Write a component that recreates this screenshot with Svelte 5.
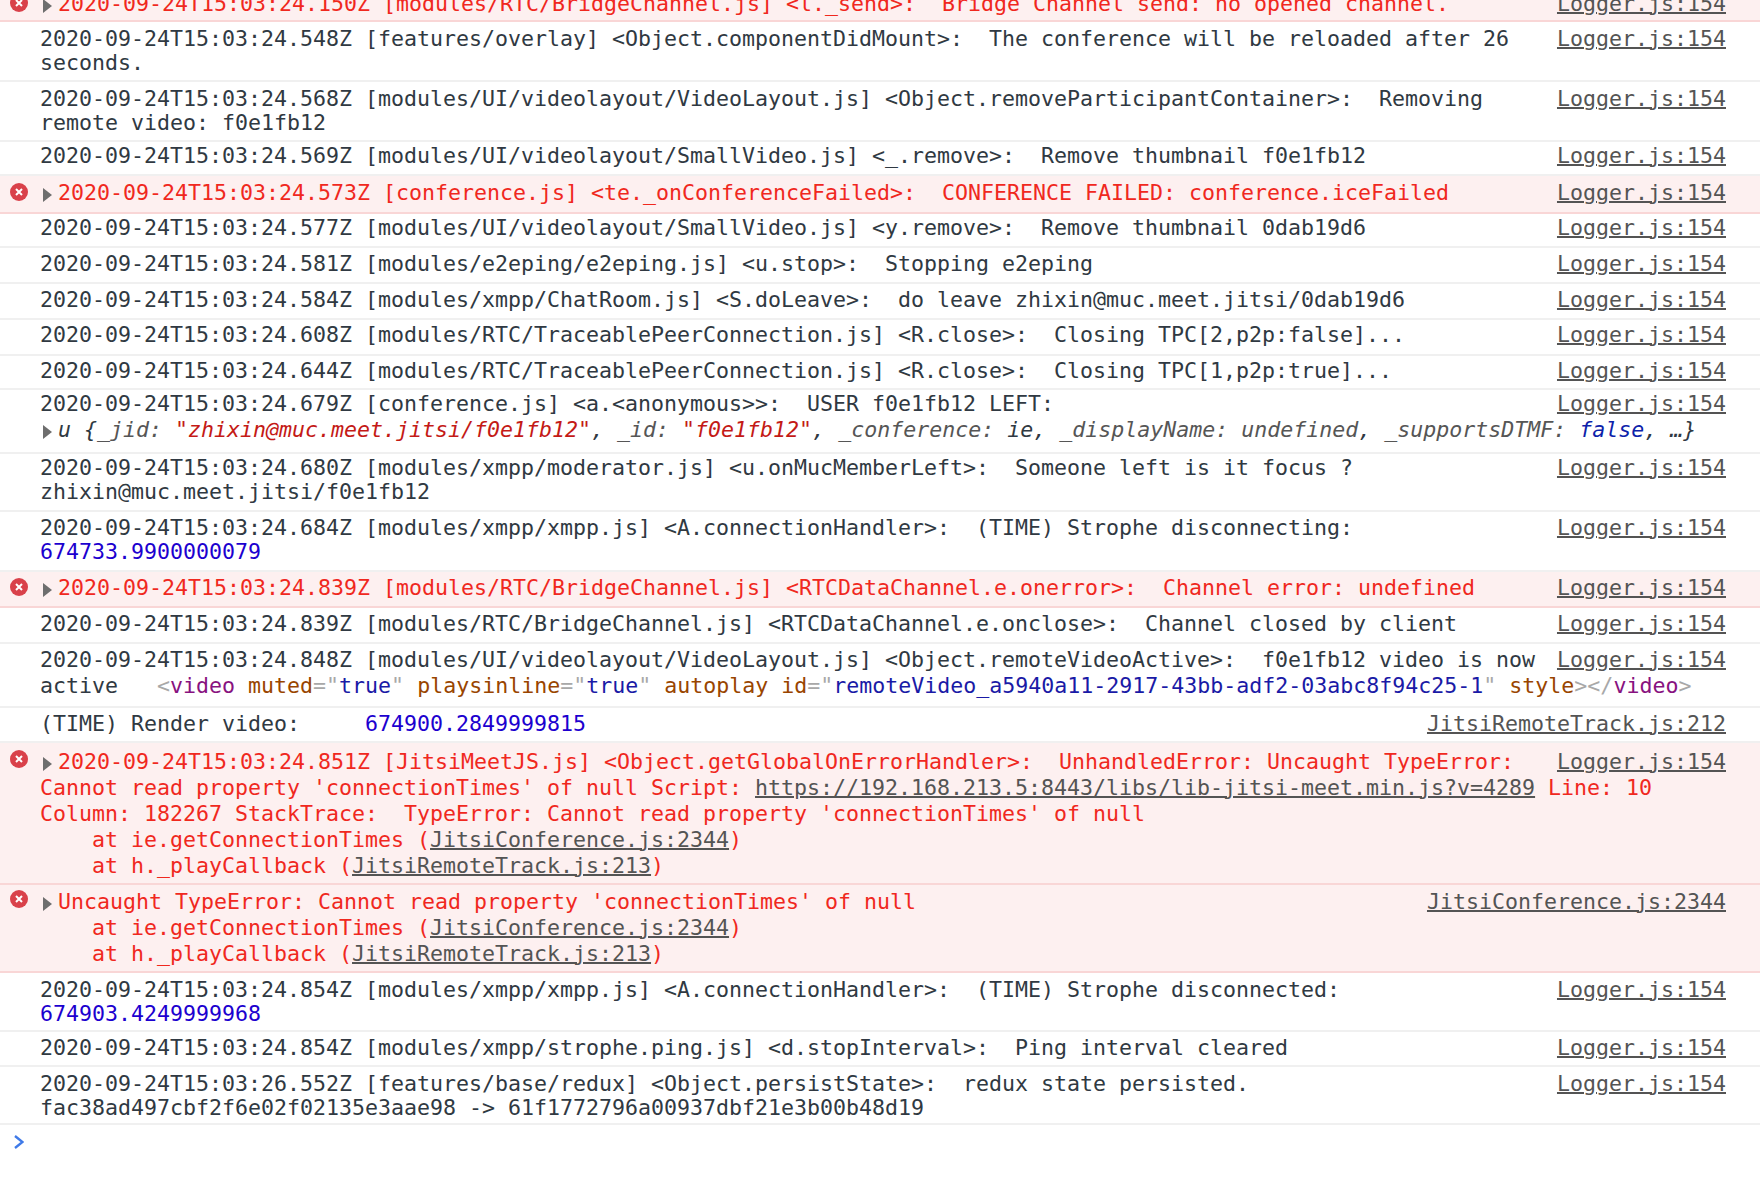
<script>
  const L = 'Logger.js:154';
  const s = (c, t) => ({ c, t });
  const plain = (...ls) => ls.map((t) => [s('', t)]);

  // h = row height, top = text offset inside the row
  const rows = [
    { err: true, src: L, h: 22, top: -8, lines: plain('2020-09-24T15:03:24.150Z [modules/RTC/BridgeChannel.js] <l._send>:  Bridge Channel send: no opened channel.') },
    { src: L, h: 60, top: 5, lines: plain('2020-09-24T15:03:24.548Z [features/overlay] <Object.componentDidMount>:  The conference will be reloaded after 26', 'seconds.') },
    { src: L, h: 60, top: 5, lines: plain('2020-09-24T15:03:24.568Z [modules/UI/videolayout/VideoLayout.js] <Object.removeParticipantContainer>:  Removing', 'remote video: f0e1fb12') },
    { src: L, h: 34, top: 2, lines: plain('2020-09-24T15:03:24.569Z [modules/UI/videolayout/SmallVideo.js] <_.remove>:  Remove thumbnail f0e1fb12') },
    { err: true, src: L, h: 38, top: 5, lines: plain('2020-09-24T15:03:24.573Z [conference.js] <te._onConferenceFailed>:  CONFERENCE FAILED: conference.iceFailed') },
    { src: L, h: 34, top: 2, lines: plain('2020-09-24T15:03:24.577Z [modules/UI/videolayout/SmallVideo.js] <y.remove>:  Remove thumbnail 0dab19d6') },
    { src: L, h: 36, top: 4, lines: plain('2020-09-24T15:03:24.581Z [modules/e2eping/e2eping.js] <u.stop>:  Stopping e2eping') },
    { src: L, h: 36, top: 4, lines: plain('2020-09-24T15:03:24.584Z [modules/xmpp/ChatRoom.js] <S.doLeave>:  do leave zhixin@muc.meet.jitsi/0dab19d6') },
    { src: L, h: 36, top: 3, lines: plain('2020-09-24T15:03:24.608Z [modules/RTC/TraceablePeerConnection.js] <R.close>:  Closing TPC[2,p2p:false]...') },
    { src: L, h: 34, top: 3, lines: plain('2020-09-24T15:03:24.644Z [modules/RTC/TraceablePeerConnection.js] <R.close>:  Closing TPC[1,p2p:true]...') },
    { src: L, h: 64, top: 1, tall: true, object: true, lines: plain('2020-09-24T15:03:24.679Z [conference.js] <a.<anonymous>>:  USER f0e1fb12 LEFT:') },
    { src: L, h: 58, top: 2, lines: plain('2020-09-24T15:03:24.680Z [modules/xmpp/moderator.js] <u.onMucMemberLeft>:  Someone left is it focus ?', 'zhixin@muc.meet.jitsi/f0e1fb12') },
    { src: L, h: 60, top: 4, lines: [[s('', '2020-09-24T15:03:24.684Z [modules/xmpp/xmpp.js] <A.connectionHandler>:  (TIME) Strophe disconnecting:')], [s('num', '674733.9900000079')]] },
    { err: true, src: L, h: 36, top: 4, lines: plain('2020-09-24T15:03:24.839Z [modules/RTC/BridgeChannel.js] <RTCDataChannel.e.onerror>:  Channel error: undefined') },
    { src: L, h: 36, top: 4, lines: plain('2020-09-24T15:03:24.839Z [modules/RTC/BridgeChannel.js] <RTCDataChannel.e.onclose>:  Channel closed by client') },
    { src: L, h: 64, top: 3, tall: true, lines: [[s('', '2020-09-24T15:03:24.848Z [modules/UI/videolayout/VideoLayout.js] <Object.remoteVideoActive>:  f0e1fb12 video is now')],
      [s('', 'active   '), s('punc', '<'), s('tag', 'video'), s('', ' '), s('attr', 'muted'), s('punc', '="'), s('val', 'true'), s('punc', '"'), s('', ' '), s('attr', 'playsinline'), s('punc', '="'), s('val', 'true'), s('punc', '"'), s('', ' '), s('attr', 'autoplay'), s('', ' '), s('attr', 'id'), s('punc', '="'), s('val', 'remoteVideo_a5940a11-2917-43bb-adf2-03abc8f94c25-1'), s('punc', '"'), s('', ' '), s('attr', 'style'), s('punc', '></'), s('tag', 'video'), s('punc', '>')]] },
    { src: 'JitsiRemoteTrack.js:212', h: 35, top: 4, lines: [[s('', '(TIME) Render video:     '), s('num', '674900.2849999815')]] },
    { err: true, tall: true, src: L, h: 142, top: 6, lines: [
      [s('', '2020-09-24T15:03:24.851Z [JitsiMeetJS.js] <Object.getGlobalOnErrorHandler>:  UnhandledError: Uncaught TypeError:')],
      [s('', "Cannot read property 'connectionTimes' of null Script: "), s('lnk', 'https://192.168.213.5:8443/libs/lib-jitsi-meet.min.js?v=4289'), s('', ' Line: 10')],
      [s('', "Column: 182267 StackTrace:  TypeError: Cannot read property 'connectionTimes' of null")],
      [s('', '    at ie.getConnectionTimes ('), s('lnk', 'JitsiConference.js:2344'), s('', ')')],
      [s('', '    at h._playCallback ('), s('lnk', 'JitsiRemoteTrack.js:213'), s('', ')')]] },
    { err: true, tall: true, src: 'JitsiConference.js:2344', h: 88, top: 4, lines: [
      [s('', "Uncaught TypeError: Cannot read property 'connectionTimes' of null")],
      [s('', '    at ie.getConnectionTimes ('), s('lnk', 'JitsiConference.js:2344'), s('', ')')],
      [s('', '    at h._playCallback ('), s('lnk', 'JitsiRemoteTrack.js:213'), s('', ')')]] },
    { src: L, h: 59, top: 5, lines: [[s('', '2020-09-24T15:03:24.854Z [modules/xmpp/xmpp.js] <A.connectionHandler>:  (TIME) Strophe disconnected:')], [s('num', '674903.4249999968')]] },
    { src: L, h: 35, top: 4, lines: plain('2020-09-24T15:03:24.854Z [modules/xmpp/strophe.ping.js] <d.stopInterval>:  Ping interval cleared') },
    { src: L, h: 58, top: 5, lines: plain('2020-09-24T15:03:26.552Z [features/base/redux] <Object.persistState>:  redux state persisted.', 'fac38ad497cbf2f6e02f02135e3aae98 -> 61f1772796a00937dbf21e3b00b48d19') }
  ];

  // the expanded object preview under "USER f0e1fb12 LEFT:"
  const preview = [
    s('', 'u {'), s('k', '_jid: '), s('str', '"zhixin@muc.meet.jitsi/f0e1fb12"'), s('', ', '),
    s('k', '_id: '), s('str', '"f0e1fb12"'), s('', ', '),
    s('k', '_conference: '), s('', 'ie, '),
    s('k', '_displayName: undefined'), s('', ', '),
    s('k', '_supportsDTMF: '), s('bool', 'false'), s('', ', …}')
  ];
</script>

<div class="console">
  {#each rows as r}
    <div class="row" class:err={r.err} class:tall={r.tall} style="height: {r.h}px">
      <div class="body" style="margin-top: {r.top}px">
        {#if r.err}
          <svg class="badge" viewBox="0 0 18 18" width="18" height="18">
            <circle cx="9" cy="9" r="9" fill="#d9414a" />
            <path d="M6 6l6 6M12 6l-6 6" stroke="#fff" stroke-width="2" />
          </svg>
        {/if}
        <a class="src" href="#log">{r.src}</a>
        {#each r.lines as line, i}
          <div class="line">{#if r.err && i === 0}<i class="tri"></i>{/if}{#each line as part}<span class={part.c}>{part.t}</span>{/each}</div>
        {/each}
        {#if r.object}
          <div class="line obj"><i class="tri"></i>{#each preview as part}<span class={part.c}>{part.t}</span>{/each}</div>
        {/if}
      </div>
    </div>
  {/each}
  <div class="prompt">
    <svg viewBox="0 0 11 14" width="11" height="14"><path d="M2 1l7.5 6-7.5 6" fill="none" stroke="#3f7ae8" stroke-width="2.4" /></svg>
  </div>
</div>

<style>
  :global(body) {
    margin: 0;
    background: #fff;
  }
  .console {
    width: 1760px;
    height: 1180px;
    overflow: hidden;
    font-family: "DejaVu Sans Mono", monospace;
    font-size: 21.6px;
    line-height: 24px;
    color: #303942;
  }
  .row {
    box-sizing: border-box;
    padding: 0 34px 0 40px;
    border-bottom: 2px solid #f0f0f0;
    overflow: hidden;
  }
  .row.err {
    background: #fdf0f0;
    color: #f0281e;
    border-bottom-color: #f9d6d6;
  }
  .row.tall {
    line-height: 26px;
  }
  .body {
    position: relative;
  }
  .line {
    white-space: pre;
  }
  .badge {
    position: absolute;
    left: -30px;
    top: 2px;
  }
  .tall .badge {
    top: 1px;
  }
  .tri {
    display: inline-block;
    width: 0;
    height: 0;
    margin-left: 3px;
    margin-right: 6px;
    vertical-align: -2px;
    border-left: 9px solid #6e6e6e;
    border-top: 7px solid transparent;
    border-bottom: 7px solid transparent;
  }
  .src {
    float: right;
    color: #545454;
    text-decoration: underline;
    text-decoration-thickness: 2px;
  }
  .lnk {
    color: #545454;
    text-decoration: underline;
    text-decoration-thickness: 2px;
  }
  .num {
    color: #1c00cf;
  }
  .obj {
    font-style: italic;
  }
  .k {
    color: #565656;
  }
  .str {
    color: #c41a16;
  }
  .bool {
    color: #0d22aa;
  }
  .punc {
    color: #a8a8a8;
  }
  .tag {
    color: #881280;
  }
  .attr {
    color: #994500;
  }
  .val {
    color: #1a1aa6;
  }
  .prompt {
    padding: 5px 0 0 13px;
  }
</style>
